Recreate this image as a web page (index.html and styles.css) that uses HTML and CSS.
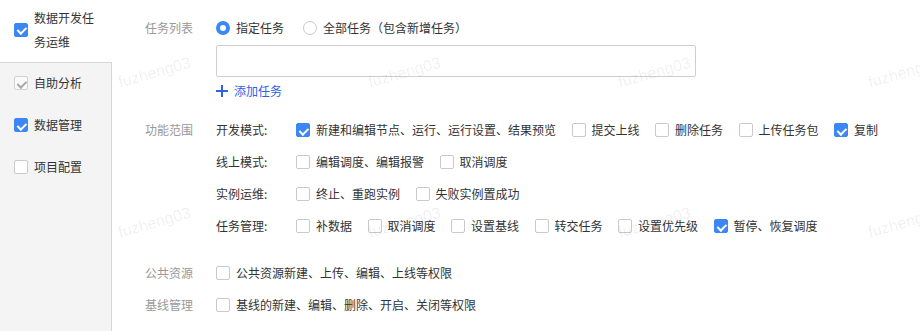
FILE: index.html
```html
<!DOCTYPE html>
<html lang="zh-CN">
<head>
<meta charset="utf-8">
<title>权限配置</title>
<link rel="stylesheet" href="styles.css">
</head>
<body>
<div class="page">
  <aside class="side">
    <div class="side-top">
      <span class="cb checked"></span>
      <span class="side-text">数据开发任务运维</span>
    </div>
    <div class="side-list">
      <div class="side-item"><span class="cb dis-checked"></span><span>自助分析</span></div>
      <div class="side-item"><span class="cb checked"></span><span>数据管理</span></div>
      <div class="side-item"><span class="cb"></span><span>项目配置</span></div>
    </div>
  </aside>

  <main class="main">
    <div class="form-row row-first">
      <div class="form-label">任务列表</div>
      <div class="form-control">
        <div class="radios">
          <label class="opt"><span class="radio on"></span>指定任务</label>
          <label class="opt"><span class="radio"></span>全部任务（包含新增任务）</label>
        </div>
        <div class="task-input"></div>
        <div class="add-link"><span class="plus"></span>添加任务</div>
      </div>
    </div>

    <div class="form-row row-func">
      <div class="form-label">功能范围</div>
      <div class="form-control">
        <div class="sub-row">
          <div class="sub-label">开发模式:</div>
          <div class="opts">
            <label class="opt"><span class="cb checked"></span>新建和编辑节点、运行、运行设置、结果预览</label>
            <label class="opt"><span class="cb"></span>提交上线</label>
            <label class="opt"><span class="cb"></span>删除任务</label>
            <label class="opt"><span class="cb"></span>上传任务包</label>
            <label class="opt"><span class="cb checked"></span>复制</label>
          </div>
        </div>
        <div class="sub-row">
          <div class="sub-label">线上模式:</div>
          <div class="opts">
            <label class="opt"><span class="cb"></span>编辑调度、编辑报警</label>
            <label class="opt"><span class="cb"></span>取消调度</label>
          </div>
        </div>
        <div class="sub-row">
          <div class="sub-label">实例运维:</div>
          <div class="opts">
            <label class="opt"><span class="cb"></span>终止、重跑实例</label>
            <label class="opt"><span class="cb"></span>失败实例置成功</label>
          </div>
        </div>
        <div class="sub-row">
          <div class="sub-label">任务管理:</div>
          <div class="opts">
            <label class="opt"><span class="cb"></span>补数据</label>
            <label class="opt"><span class="cb"></span>取消调度</label>
            <label class="opt"><span class="cb"></span>设置基线</label>
            <label class="opt"><span class="cb"></span>转交任务</label>
            <label class="opt"><span class="cb"></span>设置优先级</label>
            <label class="opt"><span class="cb checked"></span>暂停、恢复调度</label>
          </div>
        </div>
      </div>
    </div>

    <div class="form-row row-public">
      <div class="form-label">公共资源</div>
      <div class="form-control">
        <label class="opt"><span class="cb"></span>公共资源新建、上传、编辑、上线等权限</label>
      </div>
    </div>

    <div class="form-row">
      <div class="form-label">基线管理</div>
      <div class="form-control">
        <label class="opt"><span class="cb"></span>基线的新建、编辑、删除、开启、关闭等权限</label>
      </div>
    </div>
  </main>

  <div class="watermarks" aria-hidden="true">
    <span>fuzheng03</span><span>fuzheng03</span><span>fuzheng03</span><span>fuzheng03</span>
    <span>fuzheng03</span><span>fuzheng03</span><span>fuzheng03</span><span>fuzheng03</span>
  </div>
</div>
</body>
</html>
```

FILE: styles.css
```css
* { box-sizing: border-box; }
html, body { margin: 0; padding: 0; background: #fff; }
body {
  font-family: "Noto Sans CJK SC", "Noto Sans", sans-serif;
  font-size: 12px;
  color: #333;
  width: 920px;
  height: 331px;
  overflow: hidden;
}
.page {
  position: relative;
  display: flex;
  height: 331px;
}

/* sidebar */
.side {
  width: 112px;
  flex: none;
  display: flex;
  flex-direction: column;
}
.side-top {
  height: 62px;
  display: flex;
  align-items: center;
  padding: 0 12px 3px 14px;
}
.side-text {
  width: 62px;
  line-height: 24px;
}
.side-list {
  flex: 1;
  background: #f4f4f4;
  border-top: 1px solid #d6d6d6;
  border-right: 1px solid #d6d6d6;
}
.side-item {
  height: 42px;
  display: flex;
  align-items: center;
  padding: 0 0 2px 14px;
  line-height: 20px;
}

/* checkbox & radio */
.cb {
  position: relative;
  flex: none;
  width: 14px;
  height: 14px;
  border: 1px solid #cacaca;
  border-radius: 2px;
  background: #fff;
  margin-right: 6px;
}
.cb.checked {
  background: #3a87f5;
  border-color: #3a87f5;
}
.cb.checked::after,
.cb.dis-checked::after {
  content: "";
  position: absolute;
  left: 4px;
  top: 1.5px;
  width: 3.5px;
  height: 7px;
  border-right: 2px solid #fff;
  border-bottom: 2px solid #fff;
  transform: rotate(45deg);
}
.cb.dis-checked {
  background: #f9f9f9;
  border-color: #d2d2d2;
}
.cb.dis-checked::after {
  border-color: #a8a8a8;
}
.radio {
  flex: none;
  width: 14px;
  height: 14px;
  border-radius: 50%;
  border: 1px solid #cacaca;
  background: #fff;
  margin-right: 6px;
}
.radio.on {
  border: 4px solid #3a87f5;
}

/* main form */
.main {
  flex: 1;
  padding-left: 33px;
}
.form-row {
  display: flex;
  align-items: flex-start;
}
.form-label {
  width: 71px;
  flex: none;
  line-height: 32px;
  color: #999;
}
.form-control {
  display: flex;
  flex-direction: column;
}
.row-first { margin-top: 12px; }
.row-func { margin-top: 13px; }
.row-public { margin-top: 15px; }

.opt {
  display: flex;
  align-items: center;
  height: 32px;
  line-height: 20px;
  white-space: nowrap;
}
.radios {
  display: flex;
  gap: 19px;
}
.task-input {
  margin-top: 1px;
  width: 480px;
  height: 32px;
  border: 1px solid #cfcfcf;
  border-radius: 2px;
  background: #fff;
}
.add-link {
  margin-top: 4px;
  display: flex;
  align-items: center;
  line-height: 20px;
  color: #2d62e6;
}
.plus {
  position: relative;
  width: 12px;
  height: 12px;
  margin-right: 6px;
}
.plus::before,
.plus::after {
  content: "";
  position: absolute;
  background: #2d62e6;
}
.plus::before { left: 0; top: 5px; width: 12px; height: 2px; }
.plus::after { left: 5px; top: 0; width: 2px; height: 12px; }

.sub-row {
  display: flex;
  height: 32px;
}
.sub-label {
  width: 80px;
  flex: none;
  line-height: 32px;
}
.opts {
  display: flex;
  gap: 15.5px;
}

/* watermark layer */
.watermarks {
  position: absolute;
  inset: 0;
  pointer-events: none;
  display: grid;
  grid-template-columns: repeat(4, 250px);
  grid-auto-rows: 150px;
  padding: 62px 0 0 117px;
  overflow: hidden;
}
.watermarks span {
  display: block;
  width: 80px;
  height: 20px;
  line-height: 20px;
  font-family: "Liberation Sans", Arial, sans-serif;
  font-size: 16px;
  color: rgba(0, 0, 0, 0.07);
  transform: rotate(-16deg);
  transform-origin: center;
}
```
